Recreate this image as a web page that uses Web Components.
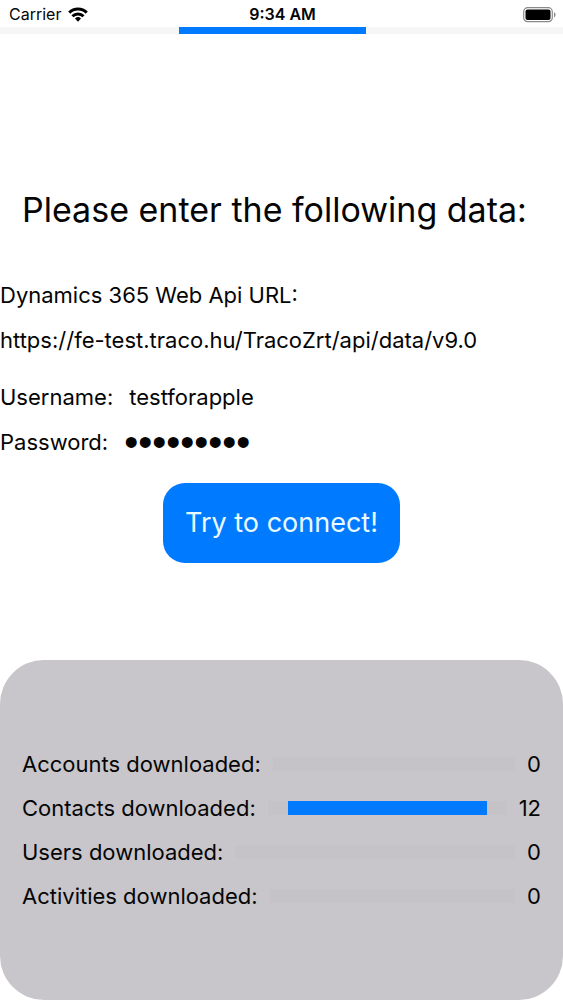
<!DOCTYPE html>
<html lang="en">
<head>
<meta charset="utf-8">
<meta name="viewport" content="width=device-width, initial-scale=1">
<title>Connect</title>
<style>
    body {
        margin: 0;
        min-height: 100vh;
        display: flex;
        flex-direction: column;
        background: #fff;
        color: #050505;
        font-family: Inter, "Liberation Sans", sans-serif;
        font-size: 22px;
        line-height: 33px;
    }
</style>
</head>
<body>
    <status-bar carrier="Carrier">9:34 AM</status-bar>
    <loading-bar style="--height: 7px; --track: #f6f6f7; --left: 179px; --right: 197px" active></loading-bar>
    <connect-form></connect-form>
    <download-panel>
        <download-row count="0">Accounts downloaded:</download-row>
        <download-row count="12" active>Contacts downloaded:</download-row>
        <download-row count="0">Users downloaded:</download-row>
        <download-row count="0">Activities downloaded:</download-row>
    </download-panel>

<script>
class StatusBar extends HTMLElement {
    connectedCallback() {
        let shadowRoot = this.attachShadow({ mode: 'open' });
        shadowRoot.innerHTML = `
            <style>
                :host {
                    display: grid;
                    grid-template-columns: 1fr auto 1fr;
                    align-items: center;
                    padding: 2px 7px 0 9px;
                    font-size: 16px;
                    line-height: 25px;
                }
                .carrier {
                    display: flex;
                    align-items: center;
                    gap: 7px;
                }
                .time {
                    font-weight: 600;
                }
                .battery {
                    justify-self: end;
                }
                svg {
                    display: block;
                }
            </style>
            <div class="carrier">
                <span>${this.getAttribute('carrier')}</span>
                <svg width="20" height="16" viewBox="0 0 21 17" fill="none" stroke="#000" stroke-width="3.200" aria-hidden="true">
                    <path d="M1.200 6a13.200 13.200 0 0 1 18.600 0"/>
                    <path d="M4.600 9.800a8.400 8.400 0 0 1 11.800 0"/>
                    <path d="M10.500 15.600l-3.200-3.300a4.600 4.600 0 0 1 6.400 0z" fill="#000" stroke="none"/>
                </svg>
            </div>
            <span class="time"><slot></slot></span>
            <svg class="battery" width="33" height="16" viewBox="0 0 33 16" aria-hidden="true">
                <rect x="0.700" y="0.700" width="28.600" height="14" rx="4" fill="#fff" stroke="#8a8a8a" stroke-width="1.200"/>
                <rect x="2.500" y="2.500" width="25" height="10.500" rx="2" fill="#000"/>
                <path d="M31 5.200c2 .6 2 4.400 0 5z" fill="#8a8a8a"/>
            </svg>
        `;
    }
}

customElements.define('status-bar', StatusBar);


// indeterminate bar: a faint track with a blue segment while it is active
class LoadingBar extends HTMLElement {
    connectedCallback() {
        let shadowRoot = this.attachShadow({ mode: 'open' });
        shadowRoot.innerHTML = `
            <style>
                :host {
                    display: block;
                    height: var(--height, 14px);
                    padding: 0 var(--right, 20px) 0 var(--left, 20px);
                    background: var(--track, #c5c3c7);
                }
                .segment {
                    height: 100%;
                }
                :host([active]) .segment {
                    background: #007aff;
                }
            </style>
            <div class="segment" role="progressbar" aria-label="Loading"></div>
        `;
    }
}

customElements.define('loading-bar', LoadingBar);


class TextField extends HTMLElement {
    connectedCallback() {
        let type = this.getAttribute('type') || 'text';
        let shadowRoot = this.attachShadow({ mode: 'open' });
        shadowRoot.innerHTML = `
            <style>
                :host {
                    display: flex;
                    gap: 16px;
                }
                :host([stacked]) {
                    flex-direction: column;
                    gap: 12px;
                }
                input {
                    flex: 1;
                    min-width: 0;
                    height: 33px;
                    box-sizing: border-box;
                    margin: 0;
                    padding: 0;
                    border: none;
                    outline: none;
                    background: none;
                    color: inherit;
                    font: inherit;
                }
                /* larger, rounder dots */
                input[type="password"] {
                    font-family: "Liberation Sans", sans-serif;
                    font-size: 40px;
                }
                :host([stacked]) input {
                    flex: none;
                }
            </style>
            <label for="field"><slot></slot></label>
            <input id="field" type="${type}" value="${this.getAttribute('value')}">
        `;
    }
}

customElements.define('text-field', TextField);


class PrimaryButton extends HTMLElement {
    connectedCallback() {
        let shadowRoot = this.attachShadow({ mode: 'open' });
        shadowRoot.innerHTML = `
            <style>
                :host {
                    display: block;
                }
                button {
                    display: block;
                    padding: 22px;
                    border: none;
                    border-radius: 22px;
                    background: #007aff;
                    color: #e9fbff;
                    font: inherit;
                    font-size: 27px;
                    line-height: 36px;
                    cursor: pointer;
                }
            </style>
            <button type="button"><slot></slot></button>
        `;
    }
}

customElements.define('primary-button', PrimaryButton);


class ConnectForm extends HTMLElement {
    connectedCallback() {
        let shadowRoot = this.attachShadow({ mode: 'open' });
        shadowRoot.innerHTML = `
            <style>
                :host {
                    display: block;
                    padding: 153px 0 97px;
                }
                h1 {
                    margin: 0 22px 46px;
                    font-size: 34px;
                    font-weight: 400;
                    line-height: 46px;
                }
                form {
                    display: flex;
                    flex-direction: column;
                    gap: 24px;
                }
                .login {
                    display: flex;
                    flex-direction: column;
                    gap: 12px;
                }
                primary-button {
                    align-self: center;
                }
            </style>
            <h1>Please enter the following data:</h1>
            <form>
                <text-field stacked value="https://fe-test.traco.hu/TracoZrt/api/data/v9.0">Dynamics 365 Web Api URL:</text-field>
                <div class="login">
                    <text-field value="testforapple">Username:</text-field>
                    <text-field type="password" value="testapple">Password:</text-field>
                </div>
                <primary-button>Try to connect!</primary-button>
            </form>
        `;
    }
}

customElements.define('connect-form', ConnectForm);


class DownloadPanel extends HTMLElement {
    connectedCallback() {
        let shadowRoot = this.attachShadow({ mode: 'open' });
        shadowRoot.innerHTML = `
            <style>
                :host {
                    flex: 1;
                    display: flex;
                    flex-direction: column;
                    justify-content: center;
                    gap: 11px;
                    padding: 22px;
                    border-radius: 44px;
                    background: #c8c6ca;
                }
            </style>
            <slot></slot>
        `;
    }
}

customElements.define('download-panel', DownloadPanel);


class DownloadRow extends HTMLElement {
    connectedCallback() {
        let active = this.hasAttribute('active') ? 'active' : '';
        let shadowRoot = this.attachShadow({ mode: 'open' });
        shadowRoot.innerHTML = `
            <style>
                :host {
                    display: flex;
                    align-items: center;
                    gap: 12px;
                }
                loading-bar {
                    flex: 1;
                }
            </style>
            <span><slot></slot></span>
            <loading-bar ${active}></loading-bar>
            <span>${this.getAttribute('count')}</span>
        `;
    }
}

customElements.define('download-row', DownloadRow);
</script>
</body>
</html>
